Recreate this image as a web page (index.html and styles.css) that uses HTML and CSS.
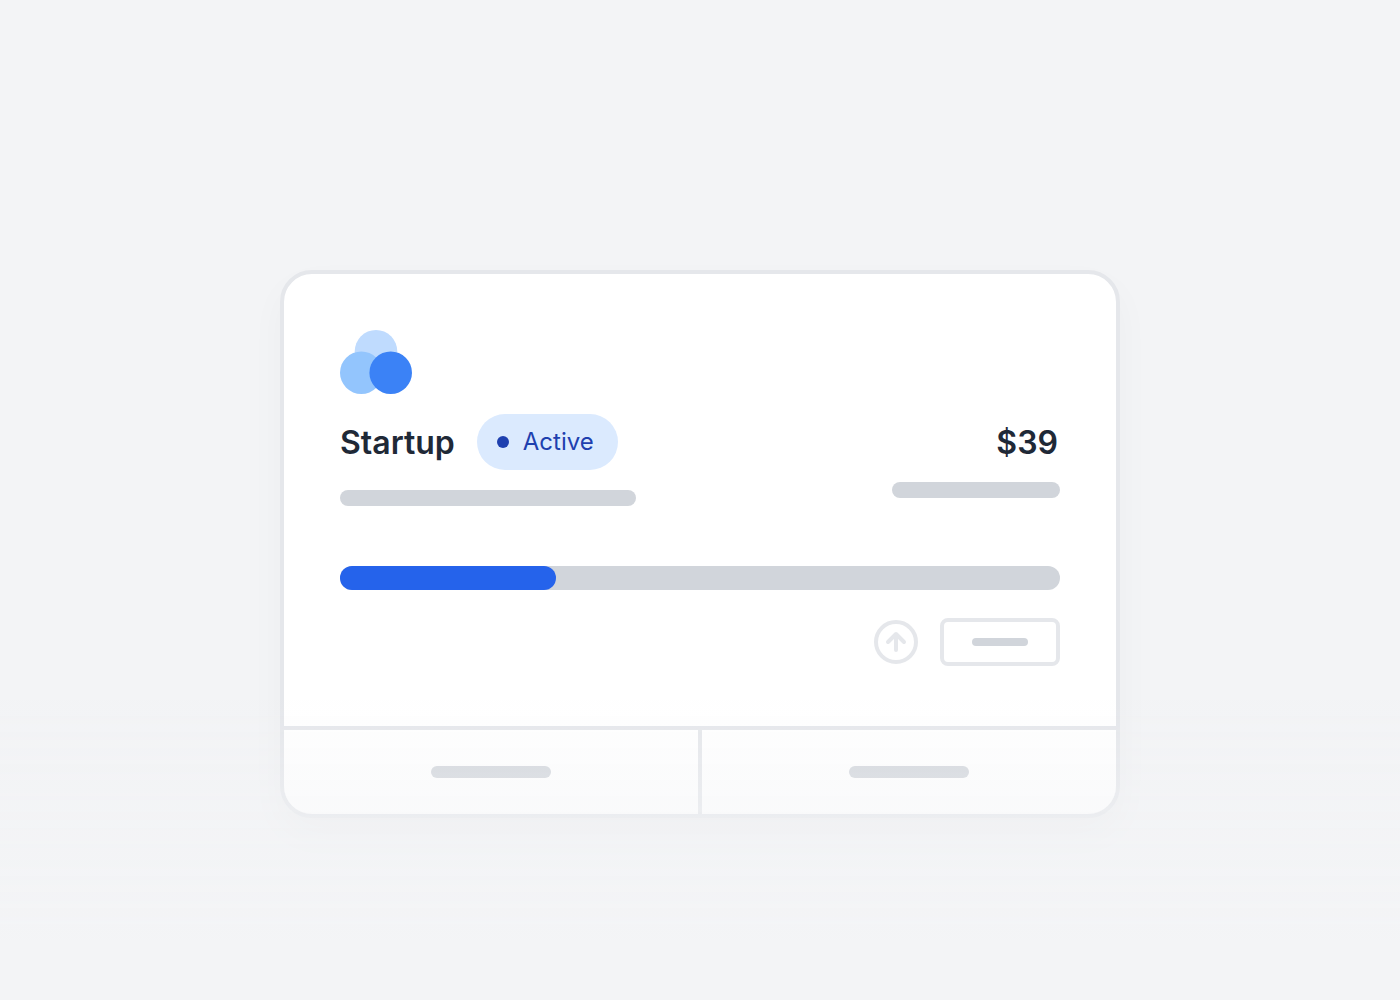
FILE: index.html
```html
<!DOCTYPE html>
<html lang="en">
<head>
  <meta charset="utf-8">
  <meta name="viewport" content="width=device-width, initial-scale=1">
  <title>Startup plan</title>
  <link rel="stylesheet" href="styles.css">
</head>
<body>
  <main class="page">
    <article class="card">
      <div class="card-body">
        <svg class="logo" viewBox="0 0 72 64" aria-hidden="true">
          <circle cx="36" cy="21.3" r="21.3" fill="#bfdbfe"/>
          <circle cx="21.3" cy="42.7" r="21.3" fill="#93c5fd"/>
          <circle cx="50.7" cy="42.7" r="21.3" fill="#3b82f6"/>
        </svg>
        <div class="summary">
          <div class="plan">
            <div class="plan-title">
              <h1 class="heading">Startup</h1>
              <span class="badge"><span class="badge-dot"></span>Active</span>
            </div>
            <div class="line line-plan"></div>
          </div>
          <div class="price">
            <p class="heading">$39</p>
            <div class="line line-price"></div>
          </div>
        </div>
        <div class="progress" role="progressbar" aria-label="Usage" aria-valuenow="30" aria-valuemin="0" aria-valuemax="100">
          <div class="progress-fill" style="width: 30%"></div>
        </div>
        <div class="actions">
          <button class="icon-button" type="button" aria-label="Upgrade">
            <svg class="icon" viewBox="0 0 44 44" fill="none" stroke="currentColor" stroke-width="4" stroke-linecap="round" stroke-linejoin="round" aria-hidden="true">
              <circle cx="22" cy="22" r="20"/>
              <path d="M22 30V14M14 22l8-8 8 8"/>
            </svg>
          </button>
          <button class="box-button" type="button" aria-label="Manage plan"><span class="line line-button"></span></button>
        </div>
      </div>
      <footer class="card-footer">
        <button class="footer-button" type="button" aria-label="Details"><span class="line line-footer"></span></button>
        <button class="footer-button" type="button" aria-label="Billing"><span class="line line-footer"></span></button>
      </footer>
    </article>
  </main>
  <div class="fade"></div>
</body>
</html>
```

FILE: styles.css
```css
*,
*::before,
*::after {
  box-sizing: border-box;
}

body {
  margin: 0;
  background: #f3f4f6;
  color: #1f2937;
  font-family: Inter, "Liberation Sans", sans-serif;
}

button {
  margin: 0;
  padding: 0;
  border: 0;
  background: none;
  font: inherit;
}

.page {
  display: flex;
  align-items: center;
  justify-content: center;
  min-height: 100vh;
  padding: 88px 24px 0;
}

.card {
  width: 100%;
  max-width: 840px;
  overflow: hidden;
  border: 4px solid #e5e7eb;
  border-radius: 32px;
  background: #fff;
  box-shadow: 0 16px 36px rgba(0, 0, 0, 0.03);
}

.card-body {
  padding: 56px 56px 60px;
}

.logo {
  display: block;
  width: 72px;
  height: 64px;
}

.summary {
  display: flex;
  justify-content: space-between;
  gap: 24px;
  margin-top: 20px;
}

.plan {
  display: flex;
  flex-direction: column;
  gap: 20px;
}

.plan-title {
  display: flex;
  align-items: center;
  gap: 20px;
}

.heading {
  margin: 0;
  padding: 2px 2px 0 0;
  font-size: 32px;
  font-weight: 600;
  line-height: 54px;
}

.badge {
  display: flex;
  align-items: center;
  gap: 14px;
  padding: 0 24px 0 20px;
  border-radius: 28px;
  background: #dbeafe;
  color: #1e40af;
  font-size: 24px;
  line-height: 56px;
}

.badge-dot {
  width: 12px;
  height: 12px;
  border-radius: 50%;
  background: currentColor;
}

.price {
  display: flex;
  flex-direction: column;
  align-items: flex-end;
  gap: 12px;
}

.line {
  display: block;
  height: 16px;
  border-radius: 8px;
  background: #d1d5db;
}

.line-plan {
  width: 296px;
}

.line-price {
  width: 168px;
}

.line-button {
  width: 56px;
  height: 8px;
}

.line-footer {
  width: 120px;
  height: 12px;
}

.progress {
  height: 24px;
  margin-top: 60px;
  border-radius: 12px;
  background: #d1d5db;
}

.progress-fill {
  height: 100%;
  border-radius: 12px;
  background: #2563eb;
}

.actions {
  display: flex;
  align-items: center;
  justify-content: flex-end;
  gap: 22px;
  margin-top: 28px;
}

.icon-button {
  color: #e5e7eb;
}

.icon {
  display: block;
  width: 44px;
  height: 44px;
}

.box-button {
  display: flex;
  align-items: center;
  justify-content: center;
  width: 120px;
  height: 48px;
  border: 4px solid #e5e7eb;
  border-radius: 8px;
}

.card-footer {
  display: grid;
  grid-template-columns: 1fr 1fr;
  gap: 4px;
  padding-top: 4px;
  background: #e5e7eb;
}

.footer-button {
  display: flex;
  align-items: center;
  justify-content: center;
  height: 84px;
  background: #fff;
}

/* Veil that dissolves the lower part of the page into the background */
.fade {
  position: fixed;
  inset: 70% 0 0;
  background: linear-gradient(rgba(243, 244, 246, 0), #f3f4f6 80%);
  pointer-events: none;
}
```
